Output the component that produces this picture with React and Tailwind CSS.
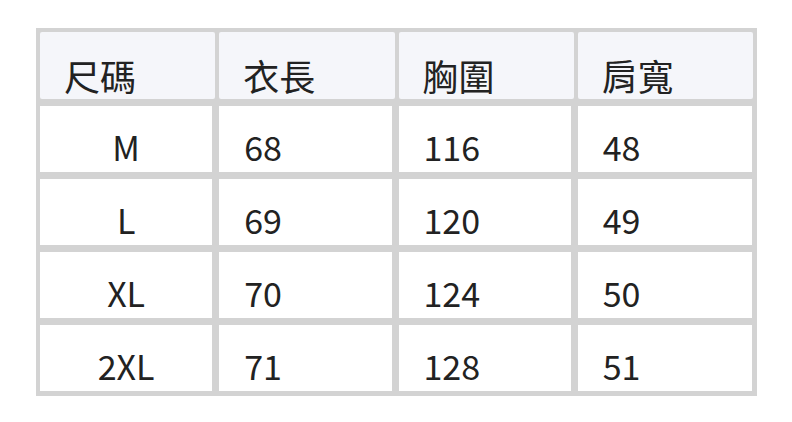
const headers = ["尺碼", "衣長", "胸圍", "肩寬"];

const rows = [
  ["M", "68", "116", "48"],
  ["L", "69", "120", "49"],
  ["XL", "70", "124", "50"],
  ["2XL", "71", "128", "51"],
];

export default function App() {
  return (
    <div
      className="min-h-screen bg-white pl-[36px] pt-[28px] text-[#222]"
      style={{ fontFamily: '"Noto Sans CJK TC", "Noto Sans", sans-serif' }}
    >
      <div className="w-[721px] bg-[#d3d3d3] pb-[5px] pl-1 pr-1 pt-1">
        <div className="grid grid-cols-4 gap-x-1">
          {headers.map((h) => (
            <div
              key={h}
              className="flex h-[67px] items-end rounded-[2px] bg-[#f5f6fa] pb-[6px] pl-[24px] text-[36px] leading-none"
            >
              {h}
            </div>
          ))}
        </div>

        <div className="mt-[7px] grid grid-cols-4 gap-x-1 gap-y-[7px]">
          {rows.map((row) =>
            row.map((cell, i) => (
              <div
                key={row[0] + i}
                className={
                  i === 0
                    ? "flex h-[66px] items-end justify-center border-r-[3px] border-[#d3d3d3] bg-white pb-2 text-[34px] leading-none"
                    : i === 3
                      ? "flex h-[66px] items-end border-r border-[#d3d3d3] bg-white pb-2 pl-[25px] text-[34px] leading-none"
                      : "flex h-[66px] items-end border-r-[3px] border-[#d3d3d3] bg-white pb-2 pl-[25px] text-[34px] leading-none"
                }
              >
                {cell}
              </div>
            ))
          )}
        </div>
      </div>
    </div>
  );
}
